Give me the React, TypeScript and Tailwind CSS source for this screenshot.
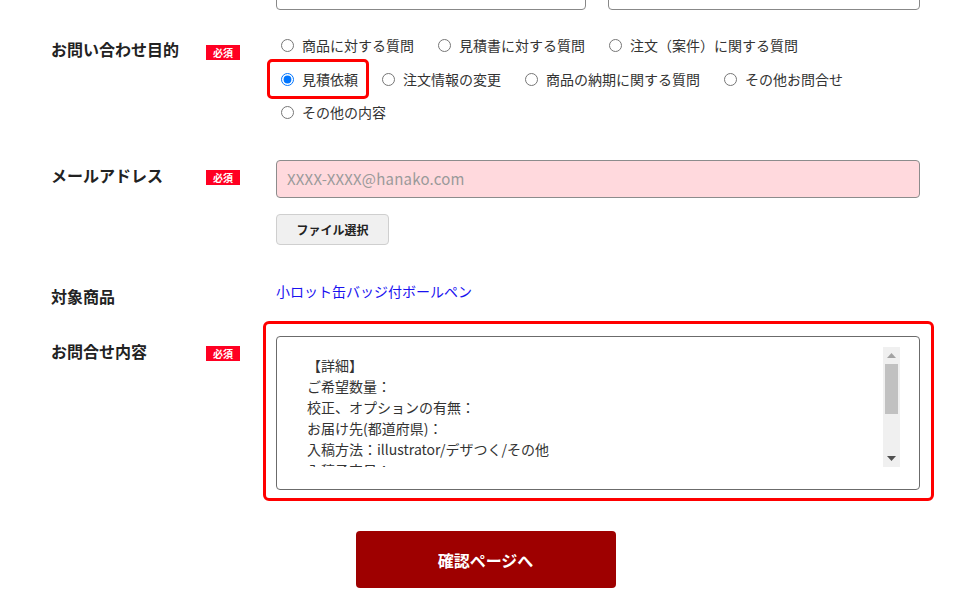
import React from 'react';

const jp = "font-['Noto_Sans_CJK_JP','Noto_Sans',sans-serif]";

const Badge = ({ top }: { top: string }) => (
  <div className={`w-[35px] shrink-0 ${top}`}>
    <span className="flex h-[15px] w-[34px] items-center justify-center bg-[#ff0022] text-[10px] font-bold leading-none text-white">
      必須
    </span>
  </div>
);

const Label = ({ text, top }: { text: string; top: string }) => (
  <div className={`w-[155px] shrink-0 text-[16px] font-bold leading-[24px] text-[#222] ${top}`}>{text}</div>
);

const Radio = ({ label, checked }: { label: string; checked?: boolean }) => (
  <label className="relative mr-[24px] flex h-[34px] items-center">
    {checked && (
      <span className="pointer-events-none absolute -bottom-[3px] -left-[14px] -right-[11px] -top-[3px] rounded-[5px] border-[3px] border-[#ff0000]" />
    )}
    <input
      type="radio"
      name="purpose"
      defaultChecked={checked}
      className="m-0 mr-[8px] h-[13px] w-[13px] accent-[#0075ff]"
    />
    <span className="text-[14px] leading-[20px] text-[#333]">{label}</span>
  </label>
);

const lines = [
  '【詳細】',
  'ご希望数量：',
  '校正、オプションの有無：',
  'お届け先(都道府県)：',
  '入稿方法：illustrator/デザつく/その他',
  '入稿予定日：',
];

export default function App() {
  return (
    <div className={`${jp} h-[604px] w-[978px] overflow-hidden bg-white pl-[51px] pr-[58px]`}>
      {/* inputs above, scrolled out of view */}
      <div className="flex h-[10px] items-end gap-[22px] overflow-hidden pl-[225px]">
        <div className="h-[38px] w-[310px] shrink-0 rounded-[4px] border border-[#888]" />
        <div className="h-[38px] flex-1 rounded-[4px] border border-[#888]" />
      </div>

      {/* purpose */}
      <div className="mt-[18px] flex items-start">
        <Label text="お問い合わせ目的" top="mt-[9px]" />
        <Badge top="mt-[17px]" />
        <div className="ml-[35px] flex-1 pl-[5px]">
          <div className="flex">
            <Radio label="商品に対する質問" />
            <Radio label="見積書に対する質問" />
            <Radio label="注文（案件）に関する質問" />
          </div>
          <div className="flex">
            <Radio label="見積依頼" checked />
            <Radio label="注文情報の変更" />
            <Radio label="商品の納期に関する質問" />
            <Radio label="その他お問合せ" />
          </div>
          <div className="-mt-[1px] flex">
            <Radio label="その他の内容" />
          </div>
        </div>
      </div>

      {/* email */}
      <div className="mt-[31px] flex items-start">
        <Label text="メールアドレス" top="mt-[3px]" />
        <Badge top="mt-[10px]" />
        <div className="ml-[35px] flex-1">
          <div className="flex h-[38px] items-center rounded-[4px] border border-[#8c8c8c] bg-[#ffd9dd] px-[10px] text-[15px] tracking-[0.2px] text-[#9a9a9a]">
            XXXX-XXXX@hanako.com
          </div>
          <button className="mt-[16px] flex h-[31px] w-[113px] items-center justify-center rounded-[4px] border border-[#cfcfcf] bg-[#f0f0f0] text-[12px] font-bold text-[#222]">
            ファイル選択
          </button>
        </div>
      </div>

      {/* product */}
      <div className="mt-[36px] flex items-start">
        <Label text="対象商品" top="mt-[3px]" />
        <div className="w-[35px] shrink-0" />
        <a className="ml-[35px] text-[14px] leading-[21px] text-[#1a12f0]">小ロット缶バッジ付ボールペン</a>
      </div>

      {/* message */}
      <div className="mt-[13px] flex items-start">
        <Label text="お問合せ内容" top="mt-[18px]" />
        <Badge top="mt-[25px]" />
        <div className="ml-[22px] flex-1 -mr-[14px] rounded-[6px] border-[3px] border-[#ff0000] pb-[8px] pl-[10px] pr-[11px] pt-[12px]">
          <div className="flex h-[154px] rounded-[4px] border border-[#6b6b6b] pb-[22px] pr-[19px] pt-[10px]">
            <div className="h-[120px] flex-1 overflow-hidden pl-[30px] pt-[8px] text-[14px] leading-[21px] text-[#333]">
              {lines.map((l) => (
                <div key={l}>{l}</div>
              ))}
            </div>
            <div className="flex h-[120px] w-[17px] flex-col items-center bg-[#f0f0f0]">
              <div className="flex h-[17px] items-center justify-center">
                <svg width="9" height="5" viewBox="0 0 9 5"><path d="M4.5 0L9 5H0z" fill="#a3a3a3" /></svg>
              </div>
              <div className="h-[50px] w-[13px] bg-[#c1c1c1]" />
              <div className="flex-1" />
              <div className="flex h-[17px] items-center justify-center">
                <svg width="9" height="5" viewBox="0 0 9 5"><path d="M0 0H9L4.5 5z" fill="#505050" /></svg>
              </div>
            </div>
          </div>
        </div>
      </div>

      {/* submit */}
      <div className="mt-[30px] flex justify-center">
        <button className="flex h-[57px] w-[260px] items-center justify-center rounded-[4px] bg-[#9e0000] text-[16px] font-bold text-white">
          確認ページへ
        </button>
      </div>
    </div>
  );
}
